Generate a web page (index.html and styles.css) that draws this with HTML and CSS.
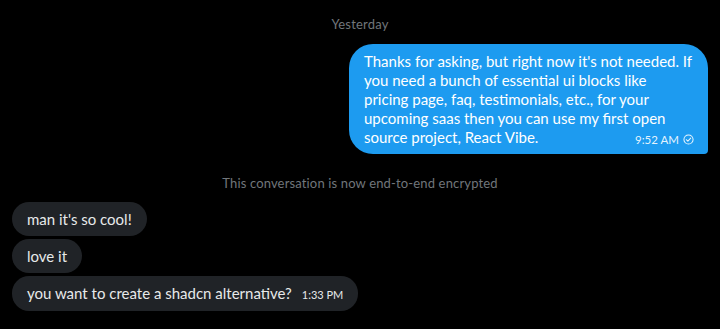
FILE: index.html
```html
<!DOCTYPE html>
<html>
<head>
  <title>Messages</title>
  <link rel="stylesheet" href="styles.css">
</head>
<body>
  <div class="thread">
    <div class="day">Yesterday</div>

    <div class="row sent">
      <div class="bubble blue">
        Thanks for asking, but right now it's not needed. If you need a bunch of essential ui blocks like pricing page, faq, testimonials, etc., for your upcoming saas then you can use my first open source project, React Vibe.<span class="meta">9:52 AM
          <svg class="seen" viewBox="0 0 12 12" width="11" height="11">
            <circle cx="6" cy="6" r="5" fill="none" stroke="currentColor" stroke-width="1.1"/>
            <path d="M3.6 6.2 L5.3 7.8 L8.4 4.5" fill="none" stroke="currentColor" stroke-width="1.1" stroke-linecap="round" stroke-linejoin="round"/>
          </svg>
        </span>
      </div>
    </div>

    <div class="notice">This conversation is now end-to-end encrypted</div>

    <div class="group">
      <div class="bubble dark">man it's so cool!</div>
      <div class="bubble dark">love it</div>
      <div class="bubble dark">you want to create a shadcn alternative?<span class="time">1:33 PM</span></div>
    </div>
  </div>
</body>
</html>
```

FILE: styles.css
```css
body {
  margin: 0;
  background-color: #000;
  font-family: Lato, "Liberation Sans", Arial, sans-serif;
  color: #e7e9ea;
}
.thread {
  padding: 16px 12px 0 12px;
}
.day {
  text-align: center;
  font-size: 13px;
  line-height: 16px;
  letter-spacing: 0.2px;
  color: #71767b;
}
.row {
  display: flex;
}
.sent {
  justify-content: flex-end;
  margin-top: 12px;
}
.bubble {
  font-size: 15px;
  line-height: 19px;
}
.blue {
  width: 330px;
  padding: 8px 14px 7px 15px;
  background-color: #1d9bf0;
  color: #fff;
  border-radius: 24px 24px 4px 24px;
}
.meta {
  float: right;
  display: inline-flex;
  align-items: flex-end;
  gap: 4px;
  height: 19px;
  font-size: 11.5px;
  line-height: 14px;
  color: rgba(255, 255, 255, 0.9);
}
.seen {
  display: block;
  margin-bottom: 2px;
}
.notice {
  text-align: center;
  margin-top: 21px;
  font-size: 13px;
  line-height: 16px;
  letter-spacing: 0.15px;
  color: #71767b;
}
.group {
  display: flex;
  flex-direction: column;
  align-items: flex-start;
  gap: 3px;
  margin-top: 11px;
}
.dark {
  padding: 8px 15px 7px 15px;
  background-color: #202327;
  border-radius: 17px;
}
.time {
  margin-left: 10px;
  font-size: 11px;
  color: #e7e9ea;
}
```
